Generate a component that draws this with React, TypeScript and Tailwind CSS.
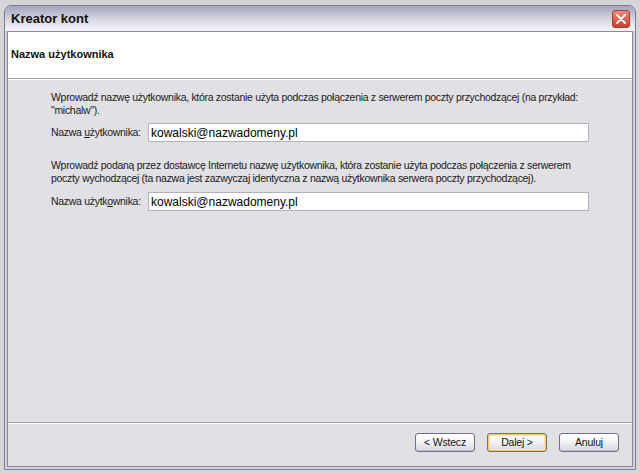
import React from 'react'

const font = "font-['Liberation_Sans',Arial,sans-serif]"

function XpButton({ label, isDefault }: { label: string; isDefault?: boolean }) {
  return (
    <button
      className={
        'w-[60px] h-[19px] rounded-[3px] border border-[#6f6f86] bg-gradient-to-b from-[#ffffff] via-[#f2f2f5] to-[#d6d6e0] text-[10.5px] tracking-[-0.2px] leading-none text-[#111] ' +
        (isDefault ? 'shadow-[inset_0_0_0_1px_#f5c66a,inset_0_0_0_2px_#fde7a8]' : 'shadow-[inset_0_-1px_0_#c4c4d2]')
      }
    >
      {label}
    </button>
  )
}

function Field({ label }: { label: React.ReactNode }) {
  return (
    <div className="flex items-center">
      <span className="w-[97px] whitespace-nowrap text-[10.5px] tracking-[-0.3px] text-[#1b1b1b]">{label}</span>
      <div className="w-[441px] h-[19px] border border-[#b2b2bc] bg-white flex items-center px-[2px] text-[12px] text-black">
        kowalski@nazwadomeny.pl
      </div>
    </div>
  )
}

export default function App() {
  return (
    <div className={`w-[640px] h-[474px] bg-[#d5d5d8] pt-[5px] pl-[4px] pr-[4px] pb-[4px] ${font}`}>
      <div className="h-full flex flex-col rounded-t-[7px] border border-[#7d7d92] bg-[#d2d2dc]">
        {/* title bar */}
        <div className="h-[25px] flex items-center justify-between pl-[6px] pr-[5px] rounded-t-[6px] bg-gradient-to-b from-[#a3a3bb] via-[#d4d4e0] to-[#f4f4f8]">
          <span className="text-[13px] font-bold text-[#101010]">Kreator kont</span>
          <div className="w-[18px] h-[18px] rounded-[3px] border border-[#b03a2e] bg-gradient-to-b from-[#e88a7a] to-[#c8402e] flex items-center justify-center">
            <svg width="10" height="10" viewBox="0 0 10 10">
              <path d="M1 1 L9 9 M9 1 L1 9" stroke="white" strokeWidth="1.8" strokeLinecap="round" />
            </svg>
          </div>
        </div>
        {/* client area */}
        <div className="flex-1 flex flex-col mx-[2px] mb-[2px] border border-[#8a8a9e] bg-[#e1e0e5]">
          <div className="h-[47px] bg-white border-b border-[#a2a2aa] pl-[3px] pt-[9px]">
            <span className="text-[11px] font-bold text-[#111]">Nazwa użytkownika</span>
          </div>
          <div className="flex-1 flex flex-col pl-[43px] pt-[11px] border-t border-white">
            <p className="text-[10.5px] tracking-[-0.3px] leading-[13px] text-[#1b1b1b] w-[530px]">
              Wprowadź nazwę użytkownika, która zostanie użyta podczas połączenia z serwerem poczty przychodzącej (na przykład: "michalw").
            </p>
            <div className="mt-[6px]">
              <Field label={<>Nazwa <span className="underline">u</span>żytkownika:</>} />
            </div>
            <p className="mt-[17px] text-[10.5px] tracking-[-0.3px] leading-[13px] text-[#1b1b1b] w-[530px]">
              Wprowadź podaną przez dostawcę Internetu nazwę użytkownika, która zostanie użyta podczas połączenia z serwerem poczty wychodzącej (ta nazwa jest zazwyczaj identyczna z nazwą użytkownika serwera poczty przychodzącej).
            </p>
            <div className="mt-[7px]">
              <Field label={<>Nazwa użytk<span className="underline">o</span>wnika:</>} />
            </div>
          </div>
          <div className="h-[44px] border-t border-[#a2a2aa] shadow-[inset_0_1px_0_#ffffff] flex items-start justify-end pt-[10px] pr-[13px] gap-[12px]">
            <XpButton label="< Wstecz" />
            <XpButton label="Dalej >" isDefault />
            <XpButton label="Anuluj" />
          </div>
        </div>
      </div>
    </div>
  )
}
